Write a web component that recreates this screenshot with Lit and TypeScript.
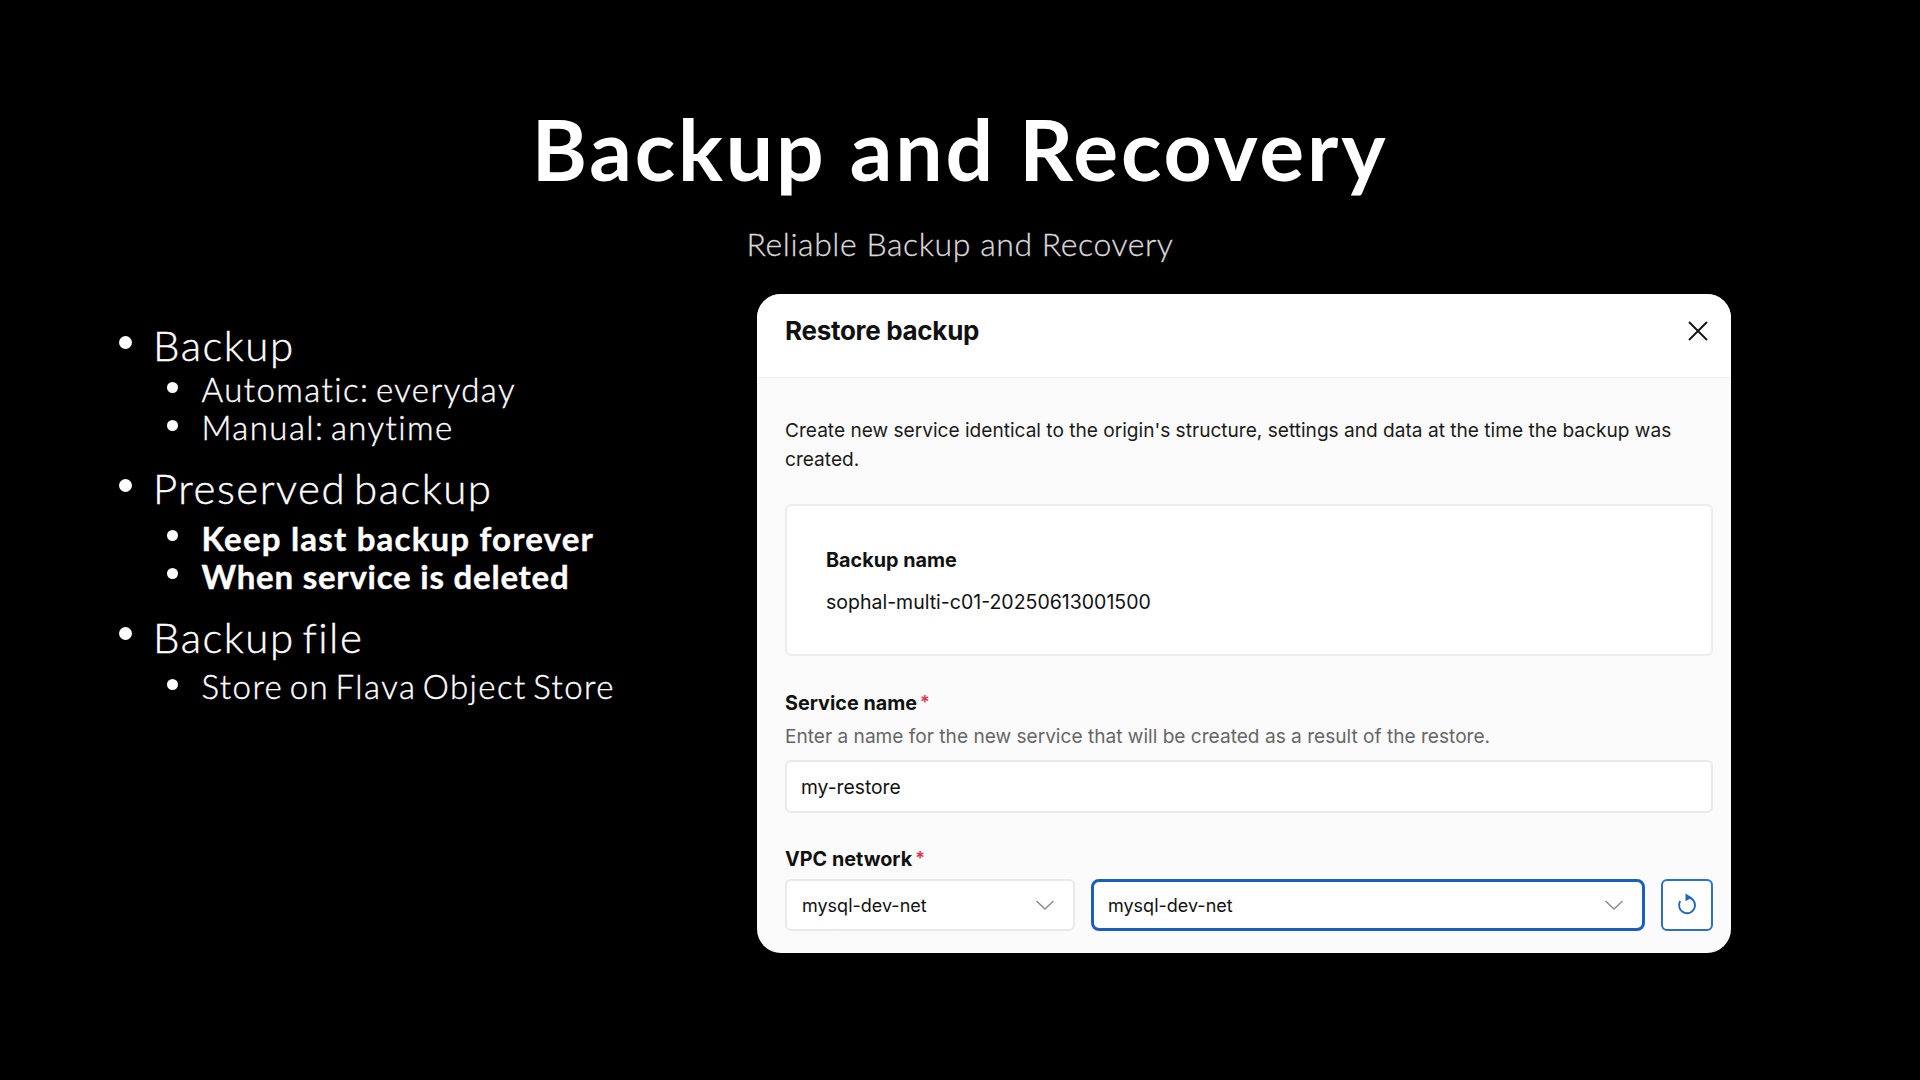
import { LitElement, html, css } from "lit";
import { customElement } from "lit/decorators.js";

const chevron = html`<svg class="chev" width="22" height="14" viewBox="0 0 22 14" fill="none" stroke="#8a8a8a" stroke-width="1.4"><path d="M2.5 3 L11 11 L19.5 3"/></svg>`;

@customElement("app-root")
export class AppRoot extends LitElement {
  static styles = css`
    :host { display: block; width: 1920px; height: 1080px; background: #000; color: #fff; overflow: hidden; font-family: "Lato", sans-serif; }
    .page { display: flex; flex-direction: column; height: 100%; box-sizing: border-box; padding-top: 99px; }
    h1 { margin: 0; text-align: center; font-size: 84px; line-height: 100px; font-weight: 700; letter-spacing: 2.85px; }
    .sub { margin-top: 25px; text-align: center; font-size: 32px; line-height: 40px; font-weight: 300; letter-spacing: 0.57px; color: #d9d9d9; -webkit-text-stroke: 0.3px #d9d9d9; }
    .main { display: flex; margin-top: 30px; }
    .left { width: 757px; flex: none; box-sizing: border-box; padding: 27px 0 0 119px; }
    .l1 { display: flex; align-items: center; font-size: 42px; line-height: 48px; font-weight: 300; letter-spacing: 1.5px; word-spacing: -5px; -webkit-text-stroke: 0.4px #fff; }
    .l1.first { margin-bottom: 1px; }
    .l2 { display: flex; align-items: center; margin-left: 48px; font-size: 33px; line-height: 38px; font-weight: 300; letter-spacing: 1.45px; word-spacing: -4px; -webkit-text-stroke: 0.4px #fff; }
    .l2.b { font-weight: 700; letter-spacing: 1.2px; word-spacing: 0; }
    .l2.b.w { letter-spacing: 0.77px; }
    .gap { margin-top: 18px; }
    .gap2 { margin-top: 6.5px; }
    .dot { flex: none; width: 13px; height: 13px; border-radius: 50%; background: #fff; margin-right: 21px; margin-top: -6px; }
    .l2 .dot { width: 11px; height: 11px; margin-right: 23.5px; margin-top: -4px; }
    .modal { width: 974px; height: 659px; border-radius: 24px; background: #fbfbfb; color: #111; overflow: hidden; font-family: "Inter", sans-serif; }
    .head { height: 84px; box-sizing: border-box; background: #fff; border-bottom: 1px solid #efefef; display: flex; align-items: center; justify-content: space-between; padding: 0 21px 10px 28px; }
    .title { font-size: 26px; font-weight: 700; letter-spacing: -0.3px; }
    .body { padding: 38px 18px 0 28px; font-size: 19.1px; }
    .desc { margin: 0; line-height: 29px; color: #1a1a1a; }
    .card { margin-top: 30px; height: 152px; box-sizing: border-box; background: #fff; border: 2px solid #ececec; border-radius: 6px; padding: 42px 39px; }
    .lab { font-weight: 700; line-height: 24px; font-size: 19.8px; }
    .val { margin-top: 18px; line-height: 24px; font-size: 19.5px; }
    .field { margin-top: 35px; }
    .req { color: #e8304f; margin-left: 3px; font-size: 18px; vertical-align: 1px; font-weight: 600; }
    .hint { color: #666; line-height: 24px; margin-top: 9px; }
    .input { margin-top: 12px; height: 53px; box-sizing: border-box; background: #fff; border: 2px solid #e9e9e9; border-radius: 6px; display: flex; align-items: center; padding: 0 14px; font-size: 19.3px; }
    .field2 { margin-top: 34px; }
    .row { margin-top: 8px; display: flex; gap: 16px; font-size: 18px; }
    .sel { height: 52px; box-sizing: border-box; background: #fff; border: 2px solid #e9e9e9; border-radius: 6px; display: flex; align-items: center; justify-content: space-between; padding: 0 17px 0 15px; }
    .s1 { width: 290px; }
    .s2 { width: 554px; border: 3px solid #1a5fc0; border-radius: 8px; padding: 0 17px 0 14px; }
    .ref { width: 52px; height: 52px; box-sizing: border-box; border: 2px solid #2f6fc9; border-radius: 6px; background: #fff; display: flex; align-items: center; justify-content: center; }
    svg { display: block; }
  `;

  render() {
    return html`<div class="page">
      <h1>Backup and Recovery</h1>
      <div class="sub">Reliable Backup and Recovery</div>
      <div class="main">
        <div class="left">
          <div class="l1 first"><span class="dot"></span>Backup</div>
          <div class="l2"><span class="dot"></span>Automatic: everyday</div>
          <div class="l2"><span class="dot"></span>Manual: anytime</div>
          <div class="l1 gap"><span class="dot"></span>Preserved backup</div>
          <div class="l2 b gap2"><span class="dot"></span>Keep last backup forever</div>
          <div class="l2 b w"><span class="dot"></span>When service is deleted</div>
          <div class="l1 gap"><span class="dot"></span>Backup file</div>
          <div class="l2 gap2"><span class="dot"></span>Store on Flava Object Store</div>
        </div>
        <div class="modal">
          <div class="head">
            <span class="title">Restore backup</span>
            <svg width="24" height="24" viewBox="0 0 24 24" fill="none" stroke="#111" stroke-width="1.8"><path d="M3 3 L21 21 M21 3 L3 21"/></svg>
          </div>
          <div class="body">
            <p class="desc">Create new service identical to the origin's structure, settings and data at the time the backup was created.</p>
            <div class="card">
              <div class="lab">Backup name</div>
              <div class="val">sophal-multi-c01-20250613001500</div>
            </div>
            <div class="field">
              <div class="lab">Service name<span class="req">*</span></div>
              <div class="hint">Enter a name for the new service that will be created as a result of the restore.</div>
              <div class="input">my-restore</div>
            </div>
            <div class="field2">
              <div class="lab">VPC network<span class="req">*</span></div>
              <div class="row">
                <div class="sel s1">mysql-dev-net${chevron}</div>
                <div class="sel s2">mysql-dev-net${chevron}</div>
                <div class="ref">
                  <svg width="24" height="24" viewBox="0 0 24 24" fill="none" stroke="#1f64c4" stroke-width="1.8"><path d="M12 4.2 A8 8 0 1 1 5.2 8"/><path d="M10.5 0.6 L17 4.4 L10.5 8.2 Z" fill="#1f64c4" stroke="none"/></svg>
                </div>
              </div>
            </div>
          </div>
        </div>
      </div>
    </div>`;
  }
}
